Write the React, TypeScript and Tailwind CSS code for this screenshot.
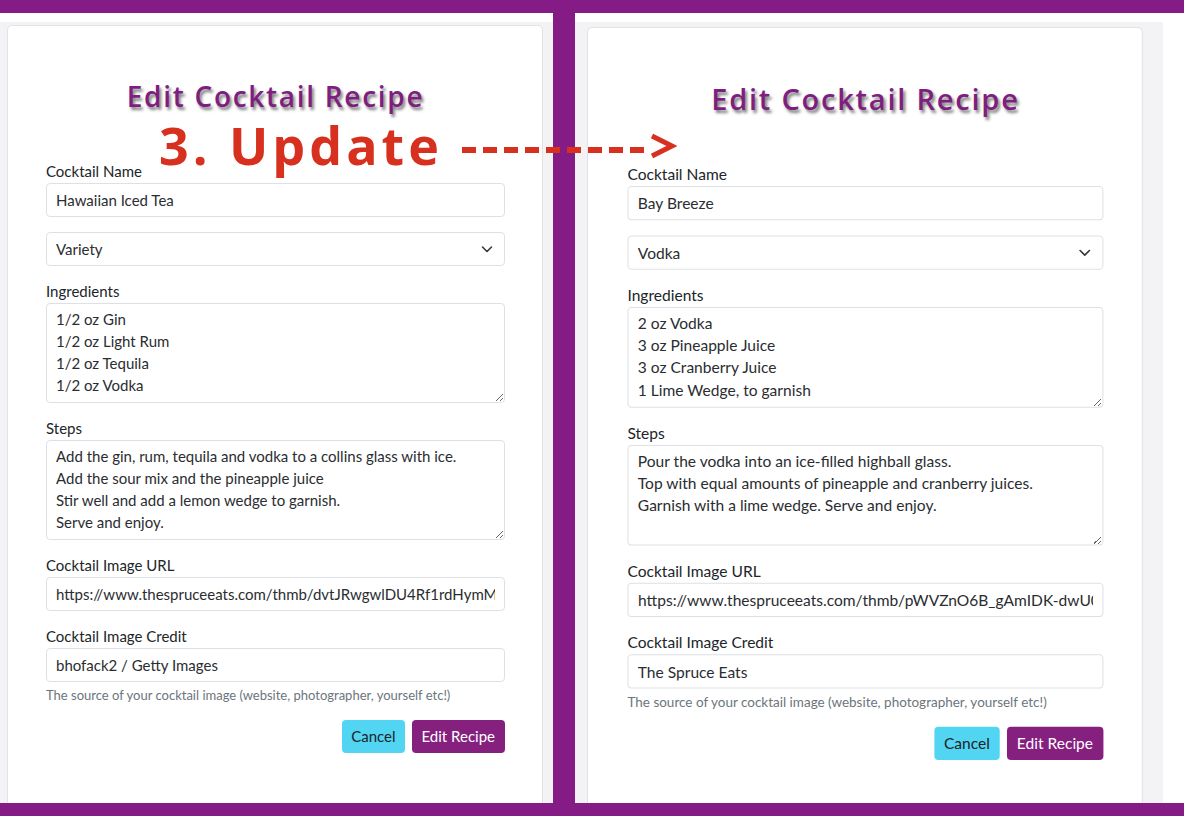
import React from "react";

type CardProps = {
  name: string;
  variety: string;
  ingredients: string;
  steps: string;
  url: string;
  credit: string;
};

const inputCls =
  "block w-full h-[34px] border border-[#dde1e5] rounded-[4px] pl-[9px] pr-[9px] text-[15px] leading-[22px] text-[#2a2d31] bg-white outline-none";
const areaCls =
  "block w-full h-[100px] border border-[#dde1e5] rounded-[4px] pl-[9px] pr-[9px] pt-[3px] pb-0 text-[15px] leading-[22px] text-[#2a2d31] bg-white outline-none overflow-hidden resize-y";
const labelCls = "block text-[15px] leading-[22px] text-[#212529] mb-px";

function Card(p: CardProps) {
  return (
    <div className="w-[536px] h-[800px] bg-white border border-[#e3e3e6] rounded-[5px] pt-[53px] pl-[38px] pr-[37px]">
      <h1 className="text-center font-['Open_Sans',sans-serif] font-semibold text-[28px] leading-[34px] tracking-[1.7px] text-[#7e1e80] [text-shadow:2px_3px_3px_rgba(0,0,0,0.5)]">
        Edit Cocktail Recipe
      </h1>
      <div className="mt-[47px]">
        <label className={labelCls}>Cocktail Name</label>
        <input className={inputCls} readOnly value={p.name} />
      </div>
      <div className="mt-[15px] relative">
        <select className={inputCls + " appearance-none"} value={p.variety} onChange={() => {}}>
          <option value={p.variety}>{p.variety}</option>
        </select>
        <svg
          className="absolute right-[12px] top-[11px] w-[12px] h-[12px] pointer-events-none"
          viewBox="0 0 12 12"
          fill="none"
          stroke="#343a40"
          strokeWidth="1.6"
          strokeLinecap="round"
          strokeLinejoin="round"
        >
          <path d="M1.5 4l4.5 4.5L10.5 4" />
        </svg>
      </div>
      <div className="mt-[14px]">
        <label className={labelCls}>Ingredients</label>
        <textarea className={areaCls + " pt-[4px]"} readOnly value={p.ingredients} />
      </div>
      <div className="mt-[14px]">
        <label className={labelCls}>Steps</label>
        <textarea className={areaCls + " pt-[4px]"} readOnly value={p.steps} />
      </div>
      <div className="mt-[14px]">
        <label className={labelCls}>Cocktail Image URL</label>
        <input className={inputCls} readOnly value={p.url} />
      </div>
      <div className="mt-[14px]">
        <label className={labelCls}>Cocktail Image Credit</label>
        <input className={inputCls} readOnly value={p.credit} />
      </div>
      <p className="mt-[4px] text-[13px] leading-[18px] text-[#6c757d]">
        The source of your cocktail image (website, photographer, yourself etc!)
      </p>
      <div className="mt-[16px] flex justify-end gap-[7px]">
        <button className="h-[33px] px-[9px] rounded-[4px] bg-[#52d5f2] text-[15px] text-[#1d2327]">
          Cancel
        </button>
        <button className="h-[33px] px-[10px] rounded-[4px] bg-[#85207f] text-[15px] text-white">
          Edit Recipe
        </button>
      </div>
    </div>
  );
}

export default function App() {
  return (
    <div className="relative w-[1184px] h-[816px] overflow-hidden bg-white flex flex-col font-['Lato',sans-serif]">
      <div className="relative z-10 h-[13px] bg-[#851c85] shrink-0" />
      <div className="flex flex-1 min-h-0 overflow-hidden">
        <div className="w-[553px] pt-[9px] shrink-0">
          <div className="h-full bg-[#f3f3f5] pl-[7px] pt-[3px]">
            <Card
              name="Hawaiian Iced Tea"
              variety="Variety"
              ingredients={"1/2 oz Gin\n1/2 oz Light Rum\n1/2 oz Tequila\n1/2 oz Vodka\n1/2 oz Triple Sec\n1/2 oz Sour Mix\n1 oz Pineapple Juice"}
              steps={"Add the gin, rum, tequila and vodka to a collins glass with ice.\nAdd the sour mix and the pineapple juice\nStir well and add a lemon wedge to garnish.\nServe and enjoy."}
              url="https://www.thespruceeats.com/thmb/dvtJRwgwlDU4Rf1rdHymMZ7xQk8=/960x0/filters:no_upscale()/hawaiian-iced-tea.jpg"
              credit="bhofack2 / Getty Images"
            />
          </div>
        </div>
        <div className="w-[22px] bg-[#851c85] shrink-0" />
        <div className="flex-1 pt-[9px]">
          <div className="w-[588px] h-full bg-[#f3f3f5] pl-[12px] pt-[5px] overflow-hidden">
            <div className="origin-top-left scale-x-[1.037] scale-y-[1.007]">
              <Card
                name="Bay Breeze"
                variety="Vodka"
                ingredients={"2 oz Vodka\n3 oz Pineapple Juice\n3 oz Cranberry Juice\n1 Lime Wedge, to garnish"}
                steps={"Pour the vodka into an ice-filled highball glass.\nTop with equal amounts of pineapple and cranberry juices.\nGarnish with a lime wedge. Serve and enjoy."}
                url="https://www.thespruceeats.com/thmb/pWVZnO6B_gAmIDK-dwU0r5kLq2Y=/960x0/filters:no_upscale()/bay-breeze.jpg"
                credit="The Spruce Eats"
              />
            </div>
          </div>
        </div>
      </div>
      <div className="relative z-10 h-[13px] bg-[#851c85] shrink-0" />

      {/* annotation overlay */}
      <div className="absolute z-20 left-[159px] top-[119px] font-['Open_Sans',sans-serif] font-bold text-[52px] leading-[52px] tracking-[4px] text-[#d7301f] whitespace-nowrap">
        3. Update
      </div>
      <div className="absolute z-20 left-[462px] top-[147px] flex gap-[7px]">
        {Array.from({ length: 9 }).map((_, i) => (
          <div key={i} className="w-[14px] h-[6px] bg-[#d7301f]" />
        ))}
      </div>
      <svg
        className="absolute z-20 left-[649px] top-[132px] w-[28px] h-[28px]"
        viewBox="0 0 28 28"
        fill="none"
        stroke="#d7301f"
        strokeWidth="5"
        strokeLinejoin="miter"
      >
        <path d="M3 4l20 10L3 24" />
      </svg>
    </div>
  );
}
